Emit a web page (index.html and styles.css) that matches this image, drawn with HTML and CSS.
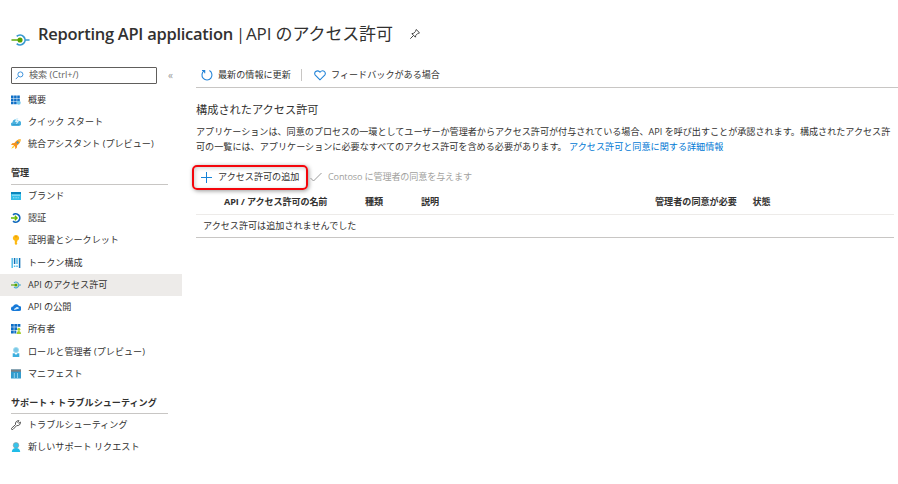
FILE: index.html
```html
<!DOCTYPE html>
<html lang="ja">
<head>
<meta charset="utf-8">
<title>Reporting API application | API のアクセス許可</title>
<link rel="stylesheet" href="styles.css">
</head>
<body>
<header class="header">
  <svg class="header-icon" viewBox="0 0 20 16"><path d="M6 4.2a5.2 5.2 0 1 1 0 7.6M15 8h4.5" fill="none" stroke="#3799d0" stroke-width="1.8"/><path d="M.5 8H8" stroke="#57a300" stroke-width="1.5"/><circle cx="9.5" cy="8" r="2.7" fill="#57a300"/></svg>
  <h1 class="title"><span class="title-app">Reporting API application</span><span class="title-bar">|</span><span class="title-page">API のアクセス許可</span></h1>
  <svg class="pin" viewBox="0 0 12 12"><path d="M7.2 1.5 10.5 4.8 8.7 5.5 6.8 7.4 6.4 9.2 2.9 5.7 4.7 5.2 6.6 3.3ZM4.5 7.5 1.3 10.7" fill="none" stroke="#444" stroke-width="1"/></svg>
</header>
<div class="layout">
  <nav class="sidebar">
    <div class="search-row">
      <div class="search"><svg class="search-icon" viewBox="0 0 10 10"><circle cx="6" cy="3.8" r="2.8" fill="none" stroke="#2b88d8" stroke-width="1"/><path d="M4 5.8.9 9" stroke="#2b88d8" stroke-width="1"/></svg><span>検索 (Ctrl+/)</span></div>
      <span class="collapse">«</span>
    </div>
    <ul class="menu">
      <li class="item"><svg class="icon" viewBox="0 0 10 10"><path d="M0 .5h2.6v2.6H0zM3.1.5h2.6v2.6H3.1zM6.2.5h2.6v2.6H6.2zM0 3.6h2.6v2.6H0zM3.1 3.6h2.6v2.6H3.1zM6.2 3.6h2.6v2.6H6.2zM0 6.7h2.6v2.6H0zM3.1 6.7h2.6v2.6H3.1z" fill="#0f6fc6"/><circle cx="7.7" cy="7.7" r="2" fill="#70c5ec"/></svg><span>概要</span></li>
      <li class="item"><svg class="icon" viewBox="0 0 10 10"><path d="M1.6 9a1.7 1.7 0 0 1-.2-3.4A3.2 3.2 0 0 1 7.2 3.8 2.6 2.6 0 0 1 8 9Z" fill="#49b1df"/><path d="M5.4 1 4 5h1.7L5 8l3-4H6.3L7.4 1Z" fill="#d9f1fb"/><path d="M1.5 7.5h7" stroke="#329bcc"/></svg><span>クイック スタート</span></li>
      <li class="item"><svg class="icon" viewBox="0 0 10 10"><path d="M9.7.3C6.5.4 4.6 2.2 3.4 4L1.2 4.3 0 6l2.2-.1 2 2L4.1 10l1.7-1.1.3-2.4C8.2 5 9.6 3.2 9.7.3Z" fill="#f7941d"/><path d="M2.2 6.8.3 9.7 3.4 8Z" fill="#ffcb05"/><path d="m9.7.3-3 .8 2.2 2.2Z" fill="#ffc633"/><circle cx="6.6" cy="3.6" r="1.1" fill="#3999c6"/></svg><span>統合アシスタント (プレビュー)</span></li>
    </ul>
    <h2 class="group">管理</h2>
    <ul class="menu">
      <li class="item"><svg class="icon" viewBox="0 0 10 10"><path d="M0 1h10v8H0Z" fill="#34bde8"/><path d="M0 1h10v2H0Z" fill="#0a86bd"/><path d="M1 4.2h8" stroke="#c2eefb" stroke-width=".8"/><path d="M2 6.8h6" stroke="#a1e3f8" stroke-dasharray="1 .6"/></svg><span>ブランド</span></li>
      <li class="item"><svg class="icon" viewBox="0 0 10 10"><path d="M2 1.9A4.1 4.1 0 1 1 2 8.1" fill="none" stroke="#1067ba" stroke-width="1.7"/><path d="M0 5h6M3.8 2.7 6.1 5 3.8 7.3" fill="none" stroke="#66b900" stroke-width="1.3"/></svg><span>認証</span></li>
      <li class="item"><svg class="icon" viewBox="0 0 10 10"><path d="M5 0a3 3 0 0 0-1.2 5.8V9L5 10l1.2-1.1V8l-.6-.5.6-.6V5.8A3 3 0 0 0 5 0Z" fill="#fdb913"/><circle cx="5" cy="1.8" r=".7" fill="#e48a00"/></svg><span>証明書とシークレット</span></li>
      <li class="item"><svg class="icon" viewBox="0 0 10 10"><path d="M1.2 0v10M6 0v6" stroke="#50bdea" stroke-width="1.5"/><path d="M3.6 0v6M8.6 0v10" stroke="#1372b7" stroke-width="1.5"/><path d="M3.6 7.5V9M6 7.5V9" stroke="#50bdea" stroke-width="1.5"/></svg><span>トークン構成</span></li>
      <li class="item item-active"><svg class="icon" viewBox="0 0 10 10"><path d="M3 3a2.8 2.8 0 1 1 0 4M8 5h2" fill="none" stroke="#4aaad0" stroke-width="1.1"/><path d="M0 5h4" stroke="#57a300" stroke-width="1.1"/><circle cx="5" cy="5" r="1.5" fill="#57a300"/></svg><span>API のアクセス許可</span></li>
      <li class="item"><svg class="icon" viewBox="0 0 10 10"><path d="M2.2 9A2.2 2.2 0 0 1 2 4.6 3.2 3.2 0 0 1 8 4a2.5 2.5 0 0 1 0 5Z" fill="#1679d8"/><path d="M3.3 8A1.3 1.3 0 0 1 4.5 6.1 1.8 1.8 0 0 1 8 6.6Z" fill="#d5edfc"/></svg><span>API の公開</span></li>
      <li class="item"><svg class="icon" viewBox="0 0 10 10"><path d="M0 0h2.8v2.8H0zM3.3 0h2.8v2.8H3.3zM6.6 0h2.8v2.8H6.6zM0 3.3h2.8v2.8H0zM3.3 3.3h2.8v2.8H3.3zM0 6.6h2.8v2.8H0zM3.3 6.6h2v2.8h-2z" fill="#0f6fc6"/><circle cx="7.8" cy="5.3" r="1.5" fill="#a4cf2f"/><path d="M5.6 10c0-4 4.4-4 4.4 0Z" fill="#a4cf2f"/></svg><span>所有者</span></li>
      <li class="item"><svg class="icon" viewBox="0 0 10 10"><circle cx="5" cy="3" r="2.6" fill="#7cc9e8" stroke="#a2dced" stroke-width=".8"/><path d="M1.7 10V6.3H8.3V10Z" fill="#3baede"/><path d="m3.5 6 1.5 2 1.5-2Z" fill="#fff"/></svg><span>ロールと管理者 (プレビュー)</span></li>
      <li class="item"><svg class="icon" viewBox="0 0 10 10"><path d="M0 .5h10v9H0Z" fill="#349ccd"/><path d="M0 .5h10v2.2H0Z" fill="#7a7f84"/><path d="M3.3 4v5M6.5 4v5" stroke="#a7dcf2" stroke-width=".8"/></svg><span>マニフェスト</span></li>
    </ul>
    <h2 class="group group-support">サポート + トラブルシューティング</h2>
    <ul class="menu menu-support">
      <li class="item"><svg class="icon" viewBox="0 0 10 10"><path d="M.5 8.3 4.5 4.6C4 2.2 5.8.3 8 .7L6.6 2.2 7.8 3.4 9.4 2C9.8 4.5 7.8 6 5.7 5.6L2 9.4C1 10.1 0 9.2.5 8.3Z" fill="none" stroke="#444" stroke-width=".9"/></svg><span>トラブルシューティング</span></li>
      <li class="item"><svg class="icon" viewBox="0 0 10 10"><circle cx="5" cy="3.3" r="2.8" fill="#35c4ec" stroke="#999" stroke-width=".6"/><path d="M.8 10C1 7.5 2.4 6 5 6s4 1.5 4.2 4Z" fill="#20bce8"/></svg><span>新しいサポート リクエスト</span></li>
    </ul>
  </nav>
  <main class="main">
    <div class="toolbar">
      <svg class="refresh" viewBox="0 0 12 12"><path d="M3.2 1.8A5 5 0 1 0 8.4 1.6M1 1.5h2.7V4.2" fill="none" stroke="#2384d8" stroke-width="1.1"/></svg>
      <span class="refresh-label">最新の情報に更新</span>
      <span class="divider"></span>
      <svg class="heart" viewBox="0 0 12 12"><path d="M6 10.8 1.3 6.1C-.8 3.4 3 .1 6 3.1 9-.1 12.8 3.4 10.7 6.1Z" fill="none" stroke="#2384d8" stroke-width="1.1"/></svg>
      <span>フィードバックがある場合</span>
    </div>
    <section class="content">
      <h2 class="section-title">構成されたアクセス許可</h2>
      <p class="description"><span class="line line-first">アプリケーションは、同意のプロセスの一環としてユーザーか管理者からアクセス許可が付与されている場合、API を呼び出すことが承認されます。構成されたアクセス許</span><span class="line line-second">可の一覧には、アプリケーションに必要なすべてのアクセス許可を含める必要があります。 <a class="link">アクセス許可と同意に関する詳細情報</a></span></p>
      <div class="actions">
        <div class="add"><svg class="plus" viewBox="0 0 11 11"><path d="M5.5 0v11M0 5.5h11" stroke="#1683d8" stroke-width="1"/></svg><span>アクセス許可の追加</span></div>
        <svg class="check" viewBox="0 0 12 12"><path d="m.5 7 3 3L11.5 2" fill="none" stroke="#999" stroke-width="1"/></svg>
        <span class="consent">Contoso に管理者の同意を与えます</span>
      </div>
      <div class="table">
        <div class="thead"><span>API / アクセス許可の名前</span><span>種類</span><span>説明</span><span>管理者の同意が必要</span><span>状態</span></div>
        <div class="empty">アクセス許可は追加されませんでした</div>
      </div>
    </section>
  </main>
</div>
</body>
</html>
```

FILE: styles.css
```css
* { box-sizing: border-box; }
body {
  margin: 0;
  width: 898px;
  height: 484px;
  overflow: hidden;
  background: #fff;
  color: #323130;
  font: 9.1px/14px "Open Sans", "Noto Sans CJK JP", sans-serif;
  white-space: nowrap;
}
h1, h2, p, ul { margin: 0; padding: 0; }
ul { list-style: none; }
svg { display: block; flex: none; }

.header { display: flex; height: 66px; padding: 0 0 0 11px; }
.header-icon { width: 19px; height: 16px; margin: 32px 8px 0 0; }
.title { display: flex; margin-top: 22px; font-size: 16.5px; line-height: 24px; font-weight: 400; }
.title-app { width: 198px; font-weight: 600; letter-spacing: -.27px; }
.title-bar { width: 10px; }
.title-page { width: 163px; font-size: 17px; font-weight: 400; letter-spacing: -.13px; }
.pin { width: 12px; height: 12px; margin-top: 28px; }

.layout { display: flex; }
.sidebar { width: 182px; flex: none; }
.search-row { display: flex; align-items: center; height: 18px; padding-left: 11px; }
.search { display: flex; align-items: center; width: 146px; height: 17px; border: 1px solid #605e5c; border-radius: 1px; color: #605e5c; }
.search-icon { width: 9px; height: 9px; margin: 0 5px 0 3px; }
.collapse { margin-left: 11px; color: #999; font-size: 10px; }
.menu { padding-top: 4.5px; }
.item { display: flex; align-items: center; height: 22.25px; padding-left: 11px; }
.item-active { background: #edebe9; }
.icon { width: 10px; height: 10px; margin-right: 7px; }
.group { width: 157px; height: 18.5px; margin: 11px 0 0 11px; border-bottom: 1px solid #c8c6c4; font-size: 9.1px; line-height: 14px; font-weight: 700; }
.group + .menu { padding-top: 0; }
.group-support { height: 18px; letter-spacing: 0; }
.menu-support { margin-top: -.25px; }

.main { flex: 1; padding-left: 14px; }
.toolbar { display: flex; align-items: center; height: 22px; padding: 0 0 4px 5px; border-bottom: 1px solid #c8c6c4; }
.refresh { width: 12px; height: 12px; margin-right: 5px; }
.refresh-label { width: 83px; }
.divider { width: 1px; height: 12px; margin-right: 12px; background: #c8c6c4; }
.heart { width: 12px; height: 12px; margin-right: 5px; }
.content { width: 698px; }
.section-title { margin-top: 12px; font-size: 11.2px; line-height: 20px; font-weight: 400; }
.description { margin-top: 5px; }
.line { display: block; }
.line-first { letter-spacing: -.015px; }
.line-second { padding-top: 1px; letter-spacing: .01px; }
.link { color: #0078d4; }
.actions { display: flex; align-items: center; height: 26px; margin: 10px 0 0 -4px; }
.add { display: flex; align-items: center; width: 116px; height: 25px; margin-top: 1px; padding: 0 0 1px 7px; border: 2px solid #f4060c; border-radius: 5px; box-shadow: 1px 1px 4px #999, inset 1px 1px 4px #ccc; }
.plus { width: 11px; height: 11px; margin-right: 6px; }
.check { width: 12px; height: 12px; margin: 0 6px 0 2px; }
.consent { color: #a19f9d; letter-spacing: -.14px; }
.table { margin-top: 1px; }
.thead { display: grid; grid-template-columns: 141px 56px 234px 97.5px 1fr; height: 24px; padding: 4px 0 0 28px; border-bottom: 1px solid #edebe9; }
.thead span { font-weight: 700; }
.thead span:first-child { letter-spacing: -.1px; }
.empty { height: 23px; padding: 4px 0 0 7px; border-bottom: 1px solid #c8c6c4; }
```
